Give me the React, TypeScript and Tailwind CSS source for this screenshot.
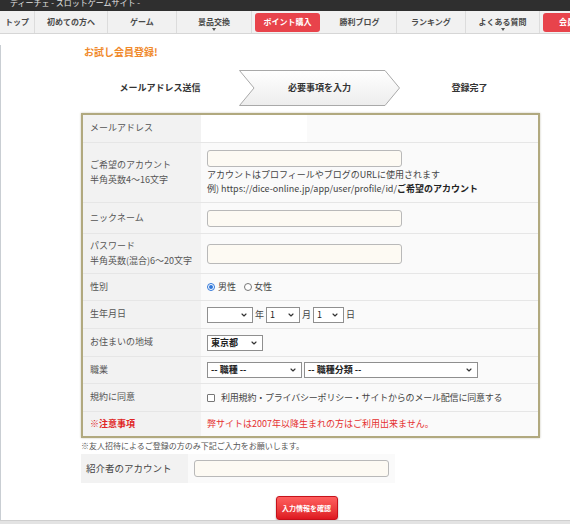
import { ChevronDown } from 'lucide-react';

const navItems = [
  { label: 'トップ', w: 'w-[35px]' },
  { label: '初めての方へ', w: 'w-[73px]' },
  { label: 'ゲーム', w: 'w-[69px]' },
  { label: '景品交換', w: 'w-[75px]', arrow: true },
  { label: 'ポイント購入', w: 'w-[71px]', red: true },
  { label: '勝利ブログ', w: 'w-[74px]' },
  { label: 'ランキング', w: 'w-[69px]' },
  { label: 'よくある質問', w: 'w-[74px]', arrow: true },
  { label: '会員登録', w: 'w-[70px]', red: true },
];

function TextInput({ w = 'w-[195px]', h = 'h-[17px]' }: { w?: string; h?: string }) {
  return <div className={`${w} ${h} shrink-0 rounded-[3px] border border-[#b9b9b9] bg-[#fdfaf3]`} />;
}

function Select({ w, value, bold }: { w: string; value?: string; bold?: boolean }) {
  return (
    <div
      className={`${w} h-[16px] shrink-0 flex items-center justify-between border border-[#8f8f8f] bg-white pl-[3px] pr-[4px] text-[9px] text-[#222]`}
    >
      <span className={bold ? 'font-bold' : ''}>{value}</span>
      <ChevronDown size={8} strokeWidth={3.5} className="text-[#333]" />
    </div>
  );
}

function Row({
  label,
  h,
  children,
  last,
  red,
}: {
  label: React.ReactNode;
  h: string;
  children?: React.ReactNode;
  last?: boolean;
  red?: boolean;
}) {
  return (
    <div className={`flex ${h} ${last ? '' : 'border-b border-[#e6e6e6]'}`}>
      <div
        className={`w-[118px] shrink-0 bg-[#f2f2f2] flex items-center pl-[7px] text-[9px] leading-[15px] ${
          red ? 'text-[#e02424] font-bold' : 'text-[#555]'
        }`}
      >
        <div className="-mt-[2px]">{label}</div>
      </div>
      <div className="flex-1 bg-[#fafafa] flex items-center pl-[6px] text-[9px] text-[#444]">{children}</div>
    </div>
  );
}

export default function App() {
  return (
    <div className="relative w-[570px] min-h-[524px] overflow-hidden bg-white font-['Noto_Sans_CJK_JP',sans-serif]">
      {/* Title bar */}
      <div className="h-[11px] overflow-hidden bg-[#2f2f2f] pl-[10px]">
        <div className="-mt-[3px] text-[8px] leading-[12px] text-[#e2e2e2] whitespace-nowrap">
          ディーチェ - スロットゲームサイト -
        </div>
      </div>

      {/* Navigation */}
      <nav className="flex h-[23px] overflow-hidden border-b border-[#d6d6d6] bg-[#f1f1f1]">
        {navItems.map((item) =>
          item.red ? (
            <div key={item.label} className={`${item.w} shrink-0 flex items-center px-[3px]`}>
              <div className="h-[19px] w-full shrink-0 rounded-[3px] bg-[#e8434b] flex items-center justify-center text-[8px] font-bold text-white whitespace-nowrap">
                {item.label}
              </div>
            </div>
          ) : (
            <div
              key={item.label}
              className={`${item.w} relative shrink-0 flex items-center justify-center border-r border-[#dcdcdc] text-[8px] font-bold text-[#4a4a4a] whitespace-nowrap`}
            >
              {item.label}
              {item.arrow && (
                <span className="absolute bottom-[2px] left-1/2 -translate-x-1/2 border-x-[2px] border-t-[3px] border-x-transparent border-t-[#555]" />
              )}
            </div>
          )
        )}
      </nav>

      <div className="border-l border-[#c9ced3] pl-[80px]">
        {/* Heading */}
        <h1 className="mt-[11px] pl-[3px] text-[10px] leading-[14px] font-bold text-[#f08a2c]">お試し会員登録!</h1>

        {/* Steps */}
        <div className="mt-[11px] flex h-[36px] text-[9px] font-bold text-[#333]">
          <div className="w-[158px] flex items-center justify-center">メールアドレス送信</div>
          <div className="relative w-[161px] flex items-center justify-center">
            <svg className="absolute inset-0 h-full w-full" viewBox="0 0 161 36" preserveAspectRatio="none">
              <defs>
                <linearGradient id="stepfill" x1="0" y1="0" x2="0" y2="1">
                  <stop offset="0" stopColor="#ffffff" />
                  <stop offset="1" stopColor="#ededed" />
                </linearGradient>
              </defs>
              <polygon
                points="0.5,0.5 146,0.5 160.5,18 146,35.5 0.5,35.5 15,18"
                fill="url(#stepfill)"
                stroke="#a9a9a9"
                strokeWidth="1"
              />
            </svg>
            <span className="relative">必要事項を入力</span>
          </div>
          <div className="w-[139px] flex items-center justify-center">登録完了</div>
        </div>

        {/* Form */}
        <div className="mt-[7px] w-[459px] border-2 border-[#b1a97f] shadow-[0_0_2px_rgba(120,110,70,0.4)]">
          <Row label="メールアドレス" h="h-[28px]">
            <div className="-ml-[6px] h-full w-[106px] bg-white" />
          </Row>
          <Row
            label={
              <>
                ご希望のアカウント
                <br />
                半角英数4～16文字
              </>
            }
            h="h-[60px]"
          >
            <div className="flex flex-col leading-[14px]">
              <TextInput />
              <span className="mt-[1px]">アカウントはプロフィールやブログのURLに使用されます</span>
              <span>
                例) https://dice-online.jp/app/user/profile/id/
                <b className="text-[#222]">ご希望のアカウント</b>
              </span>
            </div>
          </Row>
          <Row label="ニックネーム" h="h-[31px]">
            <TextInput />
          </Row>
          <Row
            label={
              <>
                パスワード
                <br />
                半角英数(混合)6～20文字
              </>
            }
            h="h-[40px]"
          >
            <TextInput h="h-[20px]" />
          </Row>
          <Row label="性別" h="h-[27px]">
            <div className="flex items-center">
              <span className="flex h-[8px] w-[8px] items-center justify-center rounded-full border border-[#2f76d9] bg-white">
                <span className="h-[4px] w-[4px] rounded-full bg-[#2f76d9]" />
              </span>
              <span className="ml-[3px]">男性</span>
              <span className="ml-[8px] h-[8px] w-[8px] rounded-full border border-[#777] bg-white" />
              <span className="ml-[2px]">女性</span>
            </div>
          </Row>
          <Row label="生年月日" h="h-[28px]">
            <div className="flex items-center gap-[2px]">
              <Select w="w-[46px]" />
              <span>年</span>
              <Select w="w-[34px]" value="1" />
              <span>月</span>
              <Select w="w-[31px]" value="1" />
              <span>日</span>
            </div>
          </Row>
          <Row label="お住まいの地域" h="h-[28px]">
            <Select w="w-[56px]" value="東京都" bold />
          </Row>
          <Row label="職業" h="h-[27px]">
            <div className="flex items-center gap-[2px]">
              <Select w="w-[95px]" value="-- 職種 --" bold />
              <Select w="w-[174px]" value="-- 職種分類 --" bold />
            </div>
          </Row>
          <Row label="規約に同意" h="h-[28px]">
            <div className="flex items-center">
              <span className="h-[8px] w-[8px] rounded-[1px] border border-[#777] bg-white" />
              <span className="ml-[6px] tracking-[-0.2px]">利用規約・プライバシーポリシー・サイトからのメール配信に同意する</span>
            </div>
          </Row>
          <Row label="※注意事項" h="h-[24px]" last red>
            <span className="text-[#e53030]">弊サイトは2007年以降生まれの方はご利用出来ません。</span>
          </Row>
        </div>

        <p className="mt-[2px] text-[8px] leading-[12px] text-[#555]">
          ※友人招待によるご登録の方のみ下記ご入力をお願いします。
        </p>

        {/* Referral */}
        <div className="mt-[2px] flex h-[29px] w-[314px]">
          <div className="w-[107px] bg-[#f2f2f2] flex items-center pl-[5px] text-[9.5px] text-[#444]">紹介者のアカウント</div>
          <div className="flex-1 bg-[#fafafa] flex items-center pl-[6px]">
            <TextInput />
          </div>
        </div>

        {/* Submit */}
        <div className="mt-[13px] flex w-[459px] justify-center">
          <button className="h-[24px] w-[62px] -ml-[8px] rounded-[3px] border border-[#c5121b] bg-gradient-to-b from-[#ff5e5e] to-[#de1620] text-[7px] font-bold text-white shadow-[0_1px_2px_rgba(0,0,0,0.35)]">
            入力情報を確認
          </button>
        </div>
      </div>

      <div className="fixed bottom-0 left-0 h-[4px] w-full border-t border-[#cfcfcf] bg-[#e3e3e3]" />
    </div>
  );
}
